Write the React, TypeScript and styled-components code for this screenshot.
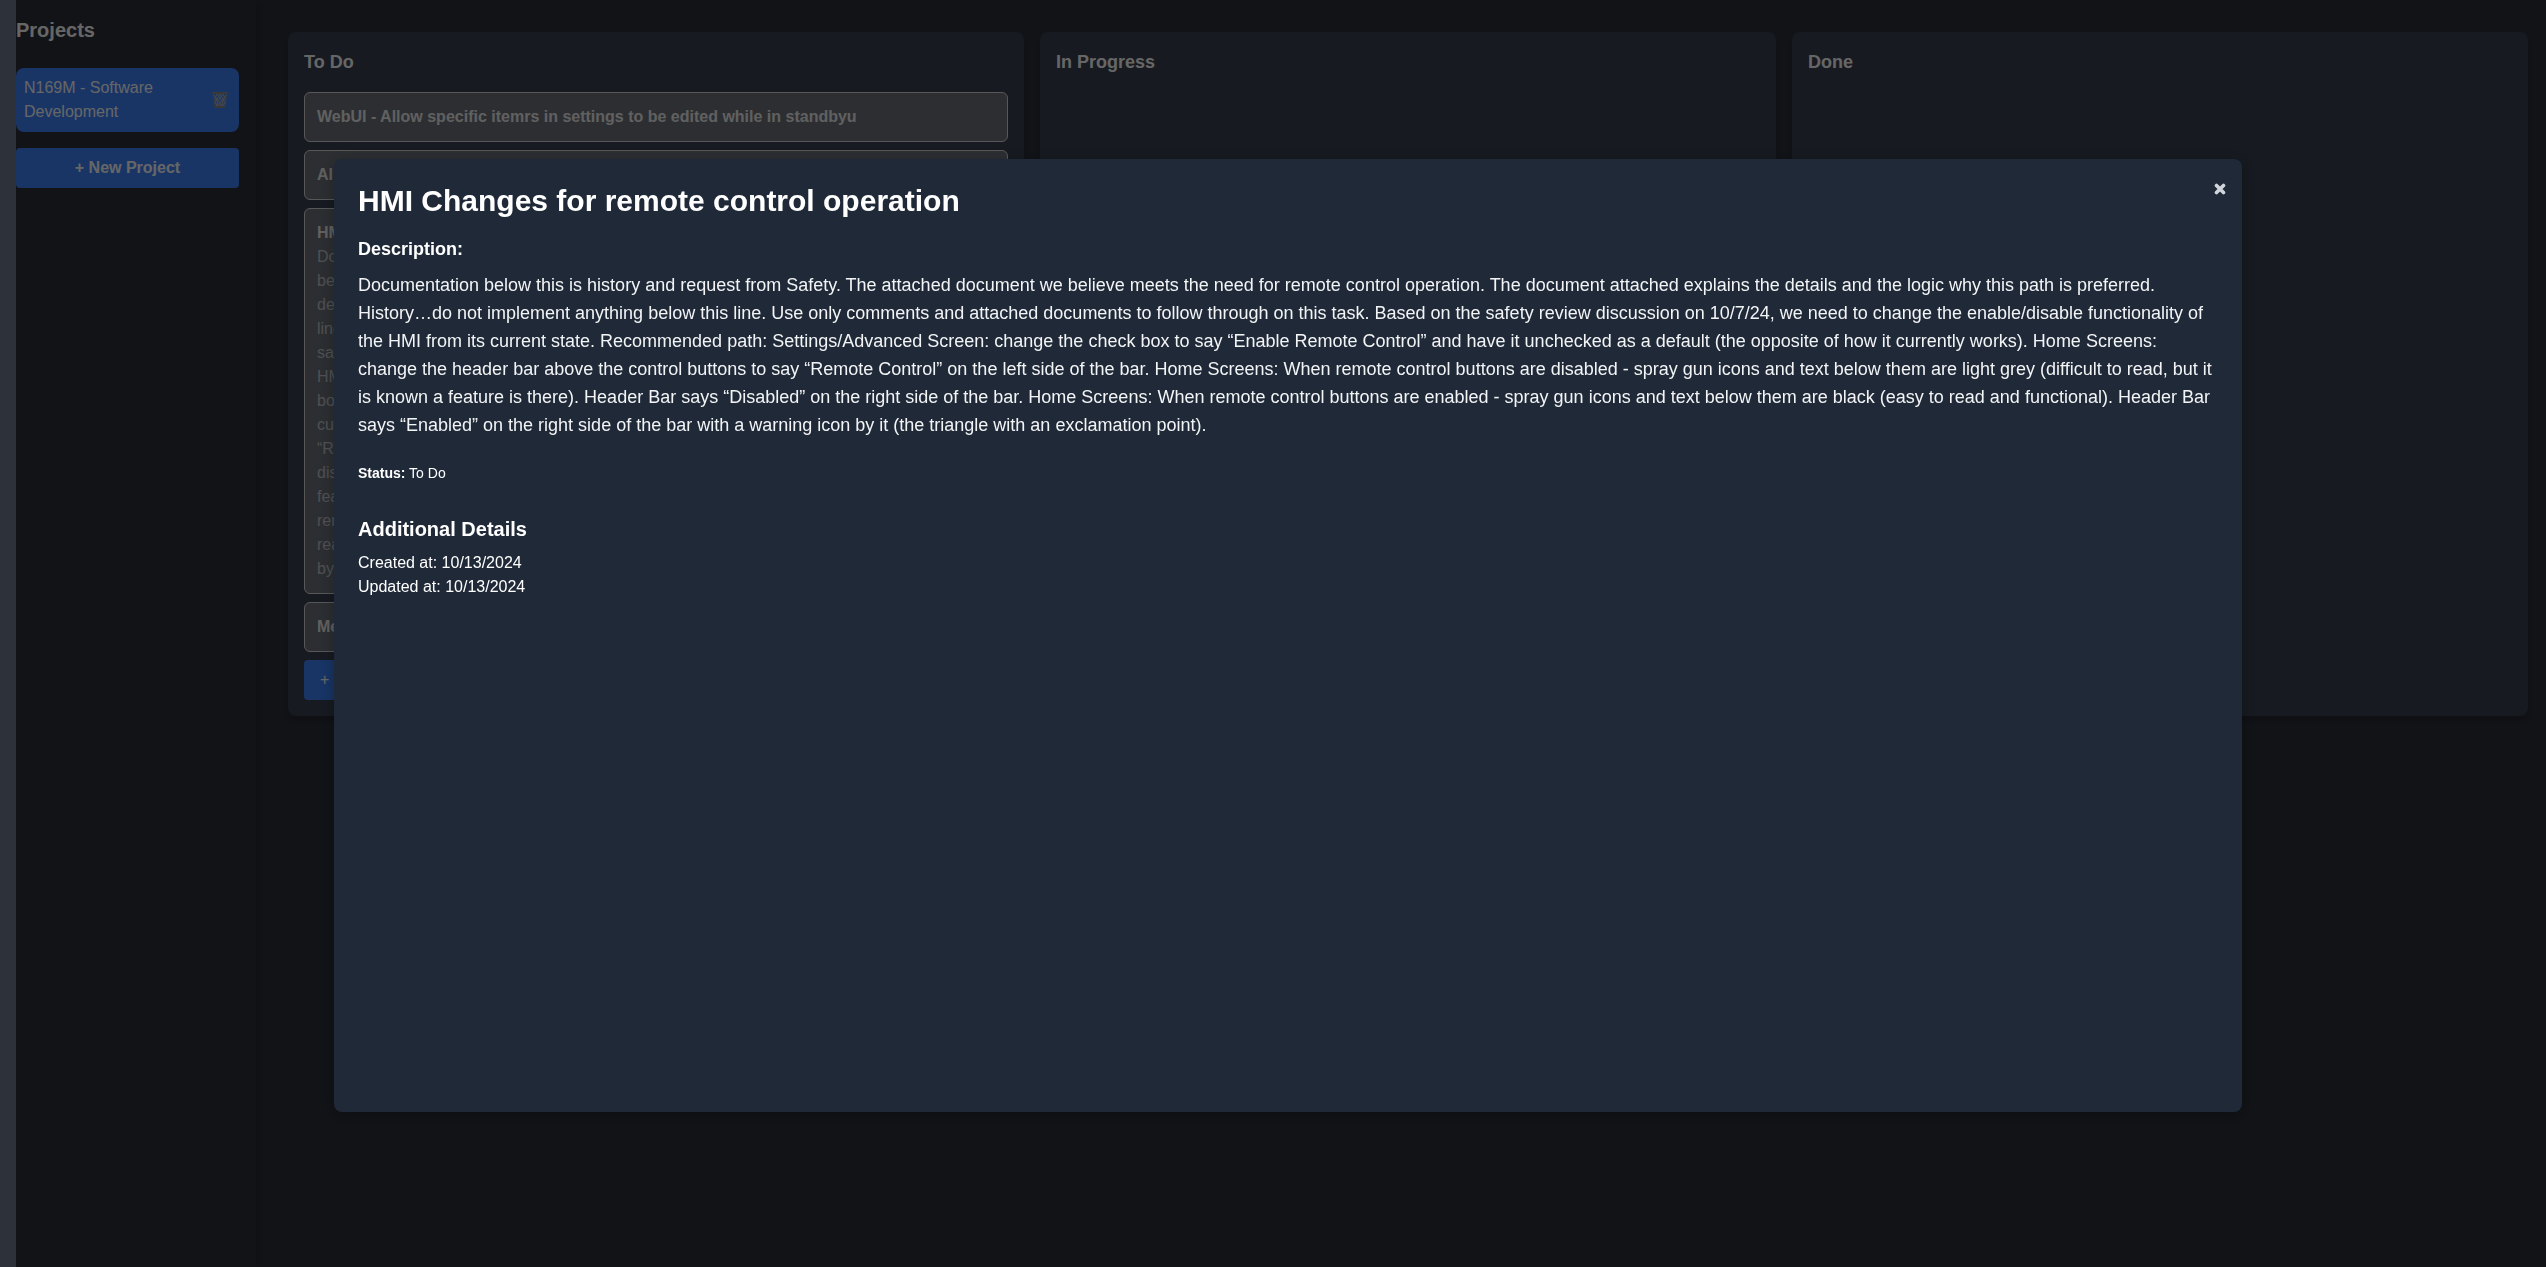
import React from 'react';
import styled, { createGlobalStyle } from 'styled-components';

const GlobalStyle = createGlobalStyle`
  * { box-sizing: border-box; }
  body {
    margin: 0;
    background: #2d3139;
    color: #ffffff;
    font-family: "Liberation Sans", Arial, sans-serif;
    font-size: 16px;
    line-height: 24px;
  }
  h1, h2, h3, h4, p, ul { margin: 0; padding: 0; }
  button { font: inherit; color: inherit; border: 0; cursor: pointer; }
`;

const Page = styled.div`
  display: flex;
  min-height: 100vh;
  margin-left: 16px;
  overflow: hidden;
  background: #2d3139;
`;

const Sidebar = styled.aside`
  flex: 0 0 240px;
  padding: 16px 17px 16px 0;
  background: #2d3139;
  box-shadow: 2px 0 8px rgba(0, 0, 0, 0.2);
`;

const SidebarTitle = styled.h2`
  margin-bottom: 24px;
  font-size: 20px;
  line-height: 28px;
`;

const ProjectList = styled.ul`
  list-style: none;
  margin-bottom: 16px;
`;

const ProjectItem = styled.li`
  display: flex;
  align-items: center;
  justify-content: space-between;
  gap: 8px;
  padding: 8px;
  border-radius: 8px;
  background: #3d85ff;
`;

const ProjectName = styled.span`
  width: 144px;
`;

const TrashButton = styled.button`
  display: flex;
  padding: 0 3px;
  background: none;
`;

const Button = styled.button<{ $bold?: boolean }>`
  width: 100%;
  padding: 8px 16px;
  border-radius: 4px;
  background: #3d85ff;
  font-weight: ${(p) => (p.$bold ? 700 : 400)};
  text-align: ${(p) => (p.$bold ? 'center' : 'left')};
`;

const Board = styled.main`
  flex: 1;
  display: grid;
  grid-template-columns: repeat(3, minmax(0, 1fr));
  gap: 16px;
  align-items: stretch;
  align-content: start;
  padding: 32px 18px 32px 32px;
`;

const Column = styled.section`
  padding: 16px;
  border-radius: 8px;
  background: #3a4152;
  box-shadow: 0 4px 6px rgba(0, 0, 0, 0.2);
`;

const ColumnTitle = styled.h3`
  margin-bottom: 16px;
  font-size: 18px;
  line-height: 28px;
`;

const Card = styled.article`
  margin-bottom: 8px;
  padding: 12px;
  min-height: 50px;
  border: 1px solid #dcdcdc;
  border-radius: 6px;
  background: #6e747c;
  color: #f0f0f0;
`;

const CardTitle = styled.h4`
  font-size: 16px;
  line-height: 24px;
`;

const CardText = styled.p`
  width: 100%;
  color: #c4c8cf;
`;

const Overlay = styled.div`
  position: fixed;
  inset: 0 -14px -4px 16px;
  display: flex;
  align-items: center;
  justify-content: center;
  background: rgba(0, 0, 0, 0.6);
`;

const Modal = styled.div`
  position: relative;
  width: 75%;
  height: 75%;
  padding: 24px;
  overflow: auto;
  border-radius: 8px;
  background: #1f2937;
  box-shadow: 0 4px 16px rgba(0, 0, 0, 0.3);
`;

const CloseButton = styled.button`
  position: absolute;
  top: 22px;
  right: 14px;
  display: flex;
  padding: 2px;
  background: none;
`;

const ModalTitle = styled.h1`
  margin-bottom: 16px;
  font-size: 30px;
  line-height: 36px;
`;

const SectionLabel = styled.h2`
  margin-bottom: 8px;
  font-size: 18px;
  line-height: 28px;
`;

const Description = styled.p`
  margin-bottom: 24px;
  color: #f3f4f6;
  font-size: 18px;
  line-height: 28px;
`;

const Status = styled.p`
  margin-bottom: 32px;
  font-size: 14px;
  line-height: 20px;
`;

const DetailsTitle = styled.h3`
  margin-bottom: 8px;
  font-size: 20px;
  line-height: 28px;
`;

const DESCRIPTION =
  'Documentation below this is history and request from Safety. The attached document we believe meets the need for remote control operation. The document attached explains the details and the logic why this path is preferred. History…do not implement anything below this line. Use only comments and attached documents to follow through on this task. Based on the safety review discussion on 10/7/24, we need to change the enable/disable functionality of the HMI from its current state. Recommended path: Settings/Advanced Screen: change the check box to say “Enable Remote Control” and have it unchecked as a default (the opposite of how it currently works). Home Screens: change the header bar above the control buttons to say “Remote Control” on the left side of the bar. Home Screens: When remote control buttons are disabled - spray gun icons and text below them are light grey (difficult to read, but it is known a feature is there). Header Bar says “Disabled” on the right side of the bar. Home Screens: When remote control buttons are enabled - spray gun icons and text below them are black (easy to read and functional). Header Bar says “Enabled” on the right side of the bar with a warning icon by it (the triangle with an exclamation point).';

const TrashIcon = () => (
  <svg width="16" height="16" viewBox="0 0 16 16" fill="none" aria-hidden="true">
    <path
      d="M2 3l3 4-2 3 3 5M5 2l3 4-3 5 3 4M8 2l3 5-3 4 2 4M11 2l2 4-3 5 1 3M14 3l-3 4 2 4-3 4M5 2L3 6l3 5-2 3M8 2L5 7l3 4-2 4M11 2L8 6l3 5-3 4"
      stroke="#b4b4b4"
    />
    <path d="M1.500 2l1.500 13M14.500 2l-1.500 13" stroke="#9a9a9a" />
    <path d="M0 1h16M3 15h10" stroke="#8c8c8c" strokeWidth="2" />
  </svg>
);

const CloseIcon = () => (
  <svg width="12" height="12" viewBox="0 0 12 12" stroke="#d1d5db" strokeWidth="3.600" strokeLinecap="round" aria-hidden="true">
    <path d="M2.500 2.500l7 7M9.500 2.500l-7 7" />
  </svg>
);

export default function App() {
  return (
    <>
      <GlobalStyle />
      <Page>
        <Sidebar>
          <SidebarTitle>Projects</SidebarTitle>
          <ProjectList>
            <ProjectItem>
              <ProjectName>N169M - Software Development</ProjectName>
              <TrashButton aria-label="Delete project">
                <TrashIcon />
              </TrashButton>
            </ProjectItem>
          </ProjectList>
          <Button $bold>+ New Project</Button>
        </Sidebar>
        <Board>
          <Column>
            <ColumnTitle>To Do</ColumnTitle>
            <Card>
              <CardTitle>WebUI - Allow specific itemrs in settings to be edited while in standbyu</CardTitle>
            </Card>
            <Card>
              <CardTitle>Al</CardTitle>
            </Card>
            <Card>
              <CardTitle>HMI Changes for remote control operation</CardTitle>
              <CardText>{DESCRIPTION}</CardText>
            </Card>
            <Card>
              <CardTitle>Me</CardTitle>
            </Card>
            <Button>+</Button>
          </Column>
          <Column>
            <ColumnTitle>In Progress</ColumnTitle>
          </Column>
          <Column>
            <ColumnTitle>Done</ColumnTitle>
          </Column>
        </Board>
      </Page>
      <Overlay>
        <Modal role="dialog" aria-modal="true" aria-labelledby="task-title">
          <CloseButton aria-label="Close">
            <CloseIcon />
          </CloseButton>
          <ModalTitle id="task-title">HMI Changes for remote control operation</ModalTitle>
          <SectionLabel>Description:</SectionLabel>
          <Description>{DESCRIPTION}</Description>
          <Status>
            <strong>Status:</strong> To Do
          </Status>
          <DetailsTitle>Additional Details</DetailsTitle>
          <p>Created at: 10/13/2024</p>
          <p>Updated at: 10/13/2024</p>
        </Modal>
      </Overlay>
    </>
  );
}
